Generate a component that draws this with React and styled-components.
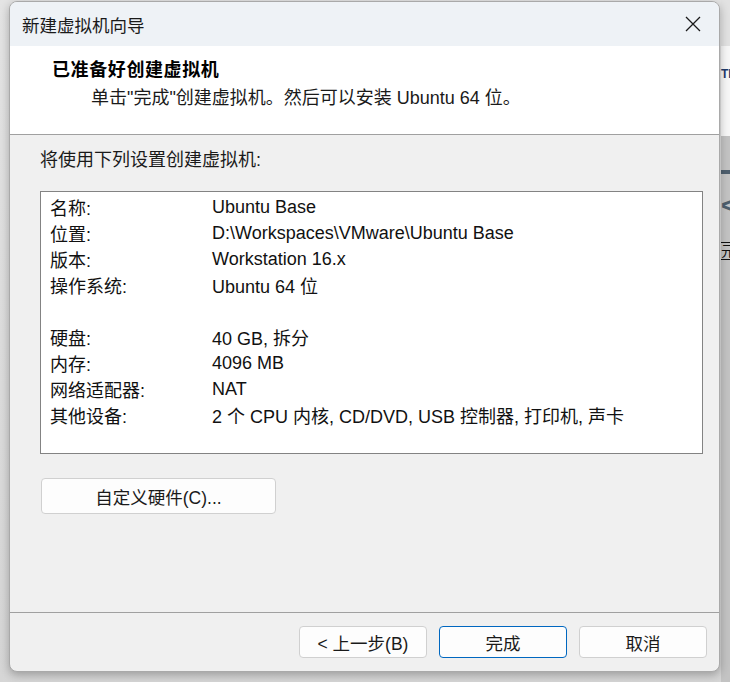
import React from 'react';
import styled, { createGlobalStyle } from 'styled-components';

const GlobalStyle = createGlobalStyle`
    html, body {
        margin: 0;
        padding: 0;
        background: #dedede;
        font-family: "Liberation Sans", "Noto Sans CJK SC", sans-serif;
        overflow: hidden;
    }
`;

const Desktop = styled.div`
    display: flex;
    width: 730px;
    height: 682px;
    overflow: hidden;
    background: linear-gradient(180deg, #e4e4e4 0%, #d6d6d6 100%);
`;

const Window = styled.div`
    position: relative;
    z-index: 1;
    display: flex;
    flex-direction: column;
    flex: 0 0 711px;
    height: 671px;
    margin: 1px 0 0 9px;
    box-sizing: border-box;
    border: 1px solid #a9a9a9;
    border-radius: 8px;
    overflow: hidden;
    background: #f0f0f0;
    box-shadow: 0 3px 10px rgba(0, 0, 0, 0.28);
`;

const TitleBar = styled.div`
    display: flex;
    align-items: center;
    justify-content: space-between;
    height: 44px;
    flex-shrink: 0;
    padding: 0 12px 0 12px;
    background: #eef2f6;
    color: #1a1a1a;
    font-size: 17.5px;
`;

const CloseBtn = styled.div`
    display: flex;
    align-items: center;
    justify-content: center;
    width: 40px;
    height: 40px;
    margin-right: -6px;
`;

const Header = styled.div`
    height: 89px;
    flex-shrink: 0;
    padding: 12px 0 0 42px;
    box-sizing: border-box;
    background: #ffffff;
    border-bottom: 1px solid #a0a0a0;
`;

const Heading = styled.div`
    font-size: 18px;
    font-weight: 700;
    letter-spacing: 0.6px;
    color: #000;
    line-height: 24px;
`;

const SubHeading = styled.div`
    margin: 4px 0 0 39px;
    font-size: 18px;
    line-height: 24px;
    color: #1a1a1a;
`;

const Body = styled.div`
    flex: 1;
    padding: 14px 16px 0 30px;
    border-bottom: 1px solid #a0a0a0;
`;

const Intro = styled.div`
    font-size: 18px;
    line-height: 22px;
    color: #1a1a1a;
`;

const ListBox = styled.div`
    margin-top: 20px;
    height: 263px;
    box-sizing: border-box;
    padding: 2px 0 0 9px;
    background: #ffffff;
    border: 1px solid #838383;
`;

const Row = styled.div`
    display: flex;
    height: ${props => props.gap ? 52 : 26}px;
    align-items: ${props => props.gap ? 'flex-end' : 'center'};
    font-size: 18px;
    color: #111;
`;

const RowInner = styled.div`
    display: flex;
    align-items: center;
    height: 26px;
`;

const Label = styled.span`
    width: 162px;
    flex-shrink: 0;
`;

const Value = styled.span`
    white-space: nowrap;
`;

const Button = styled.button`
    width: ${props => props.w || 128}px;
    height: ${props => props.h || 32}px;
    box-sizing: border-box;
    background: #fdfdfd;
    border: 1px solid ${props => props.primary ? '#0067c0' : '#d0d0d0'};
    border-radius: 4px;
    font-family: "Liberation Sans", "Noto Sans CJK SC", sans-serif;
    font-size: 17.5px;
    color: #1a1a1a;
    padding: 0;
    cursor: default;
`;

const CustomWrap = styled.div`
    margin-top: 24px;
    margin-left: 1px;
`;

const Footer = styled.div`
    display: flex;
    justify-content: flex-end;
    gap: 12px;
    height: 58px;
    flex-shrink: 0;
    padding: 13px 12px 0 0;
    box-sizing: border-box;
`;

const BackWindow = styled.div`
    flex: 1;
    display: flex;
    flex-direction: column;
    margin-left: 1px;
`;

const BackTop = styled.div`
    height: 46px;
    background: #e2e2e2;
`;

const BackHead = styled.div`
    height: 90px;
    background: #f7f7f7;
    color: #1f3a6b;
    font-size: 12px;
    font-weight: 700;
    padding-top: 22px;
    box-sizing: border-box;
    line-height: 12px;
`;

const BackPanel = styled.div`
    flex: 1;
    background: #c3c3c3;
    display: flex;
    flex-direction: column;
    padding-top: 34px;
`;

const BackBar = styled.div`
    height: 4px;
    background: #4e5f6e;
`;

const BackArrow = styled.div`
    margin-top: 18px;
    color: #4e5f6e;
    font-size: 26px;
    font-weight: 700;
    line-height: 26px;
`;

const BackLink = styled.div`
    margin-top: 24px;
    font-size: 14px;
    line-height: 16px;
    color: #111;
    border-top: 1px solid #111;
    border-bottom: 1px solid #111;
    white-space: nowrap;
`;

const rows = [
    ['名称:', 'Ubuntu Base'],
    ['位置:', 'D:\\Workspaces\\VMware\\Ubuntu Base'],
    ['版本:', 'Workstation 16.x'],
    ['操作系统:', 'Ubuntu 64 位'],
    ['硬盘:', '40 GB, 拆分', true],
    ['内存:', '4096 MB'],
    ['网络适配器:', 'NAT'],
    ['其他设备:', '2 个 CPU 内核, CD/DVD, USB 控制器, 打印机, 声卡'],
];

export default function App() {
    return (
        <>
            <GlobalStyle />
            <Desktop>
                <Window>
                    <TitleBar>
                        <span>新建虚拟机向导</span>
                        <CloseBtn>
                            <svg width="16" height="16" viewBox="0 0 16 16">
                                <path d="M1 1 L15 15 M15 1 L1 15" stroke="#1a1a1a" strokeWidth="1.3" fill="none" />
                            </svg>
                        </CloseBtn>
                    </TitleBar>
                    <Header>
                        <Heading>已准备好创建虚拟机</Heading>
                        <SubHeading>单击"完成"创建虚拟机。然后可以安装 Ubuntu 64 位。</SubHeading>
                    </Header>
                    <Body>
                        <Intro>将使用下列设置创建虚拟机:</Intro>
                        <ListBox>
                            {rows.map(([label, value, gap]) => (
                                <Row key={label} gap={gap ? 1 : 0}>
                                    <RowInner>
                                        <Label>{label}</Label>
                                        <Value>{value}</Value>
                                    </RowInner>
                                </Row>
                            ))}
                        </ListBox>
                        <CustomWrap>
                            <Button w={235} h={36}>自定义硬件(C)...</Button>
                        </CustomWrap>
                    </Body>
                    <Footer>
                        <Button>&lt; 上一步(B)</Button>
                        <Button primary>完成</Button>
                        <Button>取消</Button>
                    </Footer>
                </Window>
                <BackWindow>
                    <BackTop />
                    <BackHead>TM</BackHead>
                    <BackPanel>
                        <BackBar />
                        <BackArrow>&lt;</BackArrow>
                        <BackLink>元</BackLink>
                    </BackPanel>
                </BackWindow>
            </Desktop>
        </>
    );
}
